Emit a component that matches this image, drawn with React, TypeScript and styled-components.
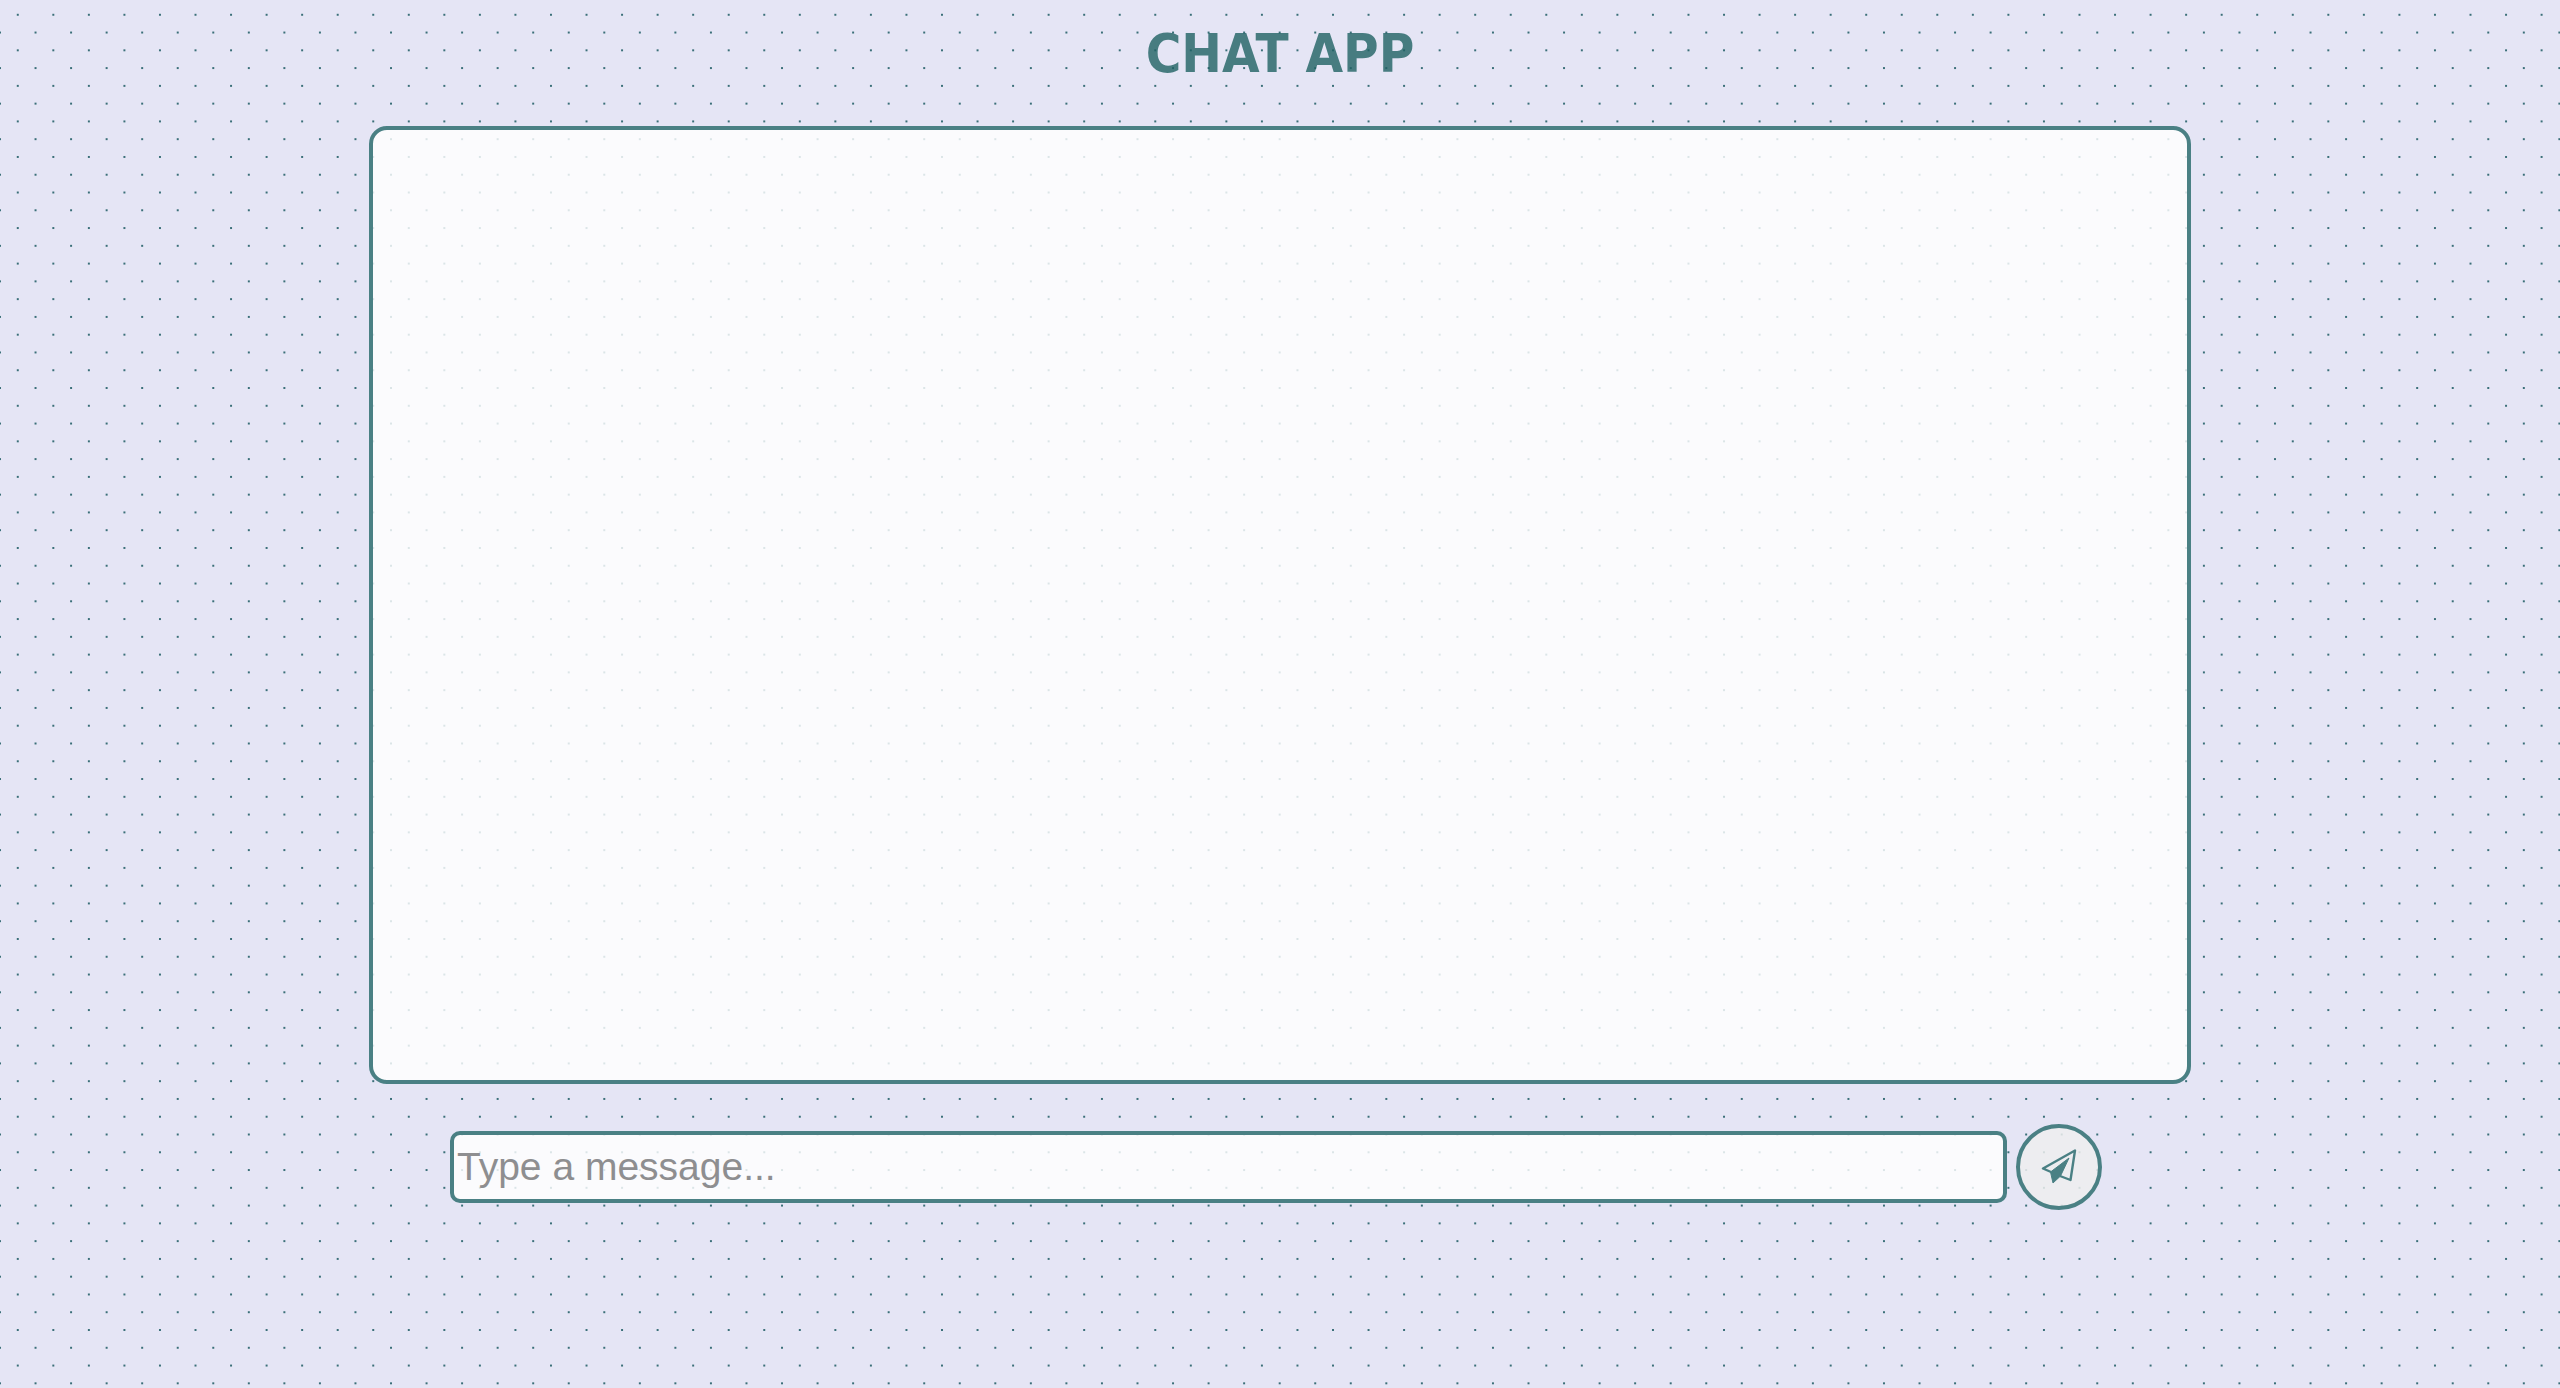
import React, { useState } from "react";
import styled, { createGlobalStyle } from "styled-components";

const teal = "#4a8084";
const surface = "rgba(255, 255, 255, 0.82)";

const GlobalStyle = createGlobalStyle`
  *, *::before, *::after { box-sizing: border-box; }
  body {
    --cell: calc(100vw / 72);
    --dot: radial-gradient(circle, #3a6f78 1px, transparent 1px);
    margin: 0;
    min-height: 100vh;
    background-color: #e5e5f5;
    background-image: var(--dot), var(--dot);
    background-size: var(--cell) var(--cell);
    background-position: 0 -3px, calc(var(--cell) / 2) calc(var(--cell) / 2 - 3px);
  }
`;

const Page = styled.main`
  display: flex;
  flex-direction: column;
  align-items: center;
  min-height: 100vh;
  font-family: "Liberation Sans", Arial, sans-serif;
`;

const Title = styled.h1`
  margin: 0;
  padding-top: 16px;
  font: 700 54px/76px "DejaVu Sans Condensed", "DejaVu Sans", sans-serif;
  font-stretch: condensed;
  color: rgba(31, 98, 99, 0.8);
`;

const Messages = styled.section`
  width: 71.2%;
  height: 69vh;
  margin-top: 34px;
  border: 4px solid ${teal};
  border-radius: 18px;
  background: ${surface};
`;

const Composer = styled.form`
  display: flex;
  align-items: center;
  gap: 9px;
  width: 65%;
  padding: 0 10px 0 2px;
  margin-top: 40px;
`;

const MessageInput = styled.input`
  flex: 1;
  min-width: 0;
  height: 72px;
  padding: 0 3px;
  border: 4px solid ${teal};
  border-radius: 10px;
  background: ${surface};
  color: #333;
  font: 39px "Liberation Sans", Arial, sans-serif;
  outline: none;
  &::placeholder { color: #8e8e90; opacity: 1; }
`;

const SendButton = styled.button`
  display: grid;
  place-items: center;
  width: 86px;
  height: 86px;
  padding: 0;
  border: 4px solid ${teal};
  border-radius: 50%;
  background: rgba(239, 239, 239, 0.85);
  color: ${teal};
  cursor: pointer;
`;

function PaperPlane() {
  return (
    <svg width="36" height="36" viewBox="0 0 36 36" fill="none" stroke="currentColor" strokeWidth="2.4" strokeLinejoin="round" aria-hidden="true">
      <path d="M10 23 2 19.5 34 1.5 29.5 31 19 27" />
      <path d="M9.5 23 28 9 19.5 27 12 34z" fill="currentColor" strokeWidth="1" />
    </svg>
  );
}

export default function App() {
  const [message, setMessage] = useState("");
  return (
    <>
      <GlobalStyle />
      <Page>
        <Title>CHAT APP</Title>
        <Messages aria-label="Messages" />
        <Composer
          onSubmit={(event) => {
            event.preventDefault();
            setMessage("");
          }}
        >
          <MessageInput
            type="text"
            aria-label="Message"
            placeholder="Type a message..."
            value={message}
            onChange={(event) => setMessage(event.target.value)}
          />
          <SendButton type="submit" aria-label="Send">
            <PaperPlane />
          </SendButton>
        </Composer>
      </Page>
    </>
  );
}
